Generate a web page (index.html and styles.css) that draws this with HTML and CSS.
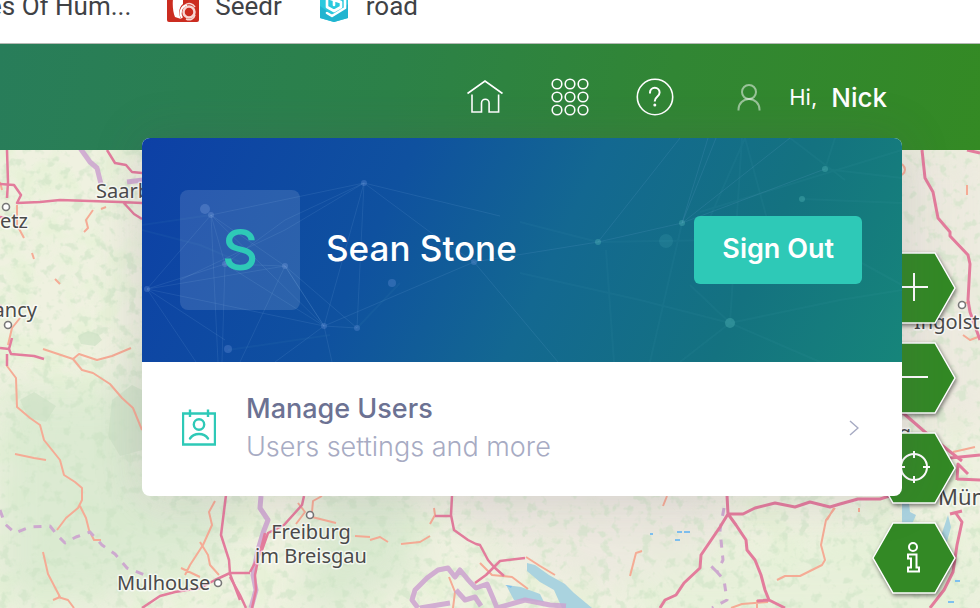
FILE: index.html
```html
<!DOCTYPE html>
<html lang="en">
<head>
<meta charset="utf-8">
<title>Map</title>
<link rel="stylesheet" href="styles.css">
</head>
<body>
<nav class="bookmarks" aria-label="Bookmarks">
  <a class="bookmark" href="#">es Of Hum...</a>
  <a class="bookmark" href="#">
    <svg class="bookmark-icon" viewBox="0 0 32 32" aria-hidden="true">
      <rect width="32" height="32" rx="2" fill="#cb2c20"/>
      <path d="M8 0C5 8 5 20 8 27l6 2c-3-6-2-12 2-15V6l-3-6z" fill="#fff"/>
      <path d="M15 28c-3-5-1-12 5-13" fill="none" stroke="#fff" stroke-width="2"/>
      <circle cx="22" cy="22" r="5.500" fill="none" stroke="#f7d6d2" stroke-width="2.500"/>
      <path d="M19 29c4 2 8 0 9-4M18 15c4-3 8-1 10 2" fill="none" stroke="#f7d6d2" stroke-width="1.500"/>
    </svg>
    Seedr
  </a>
  <a class="bookmark" href="#">
    <svg class="bookmark-icon" viewBox="0 0 32 32" aria-hidden="true">
      <path d="M2 4 16 -4 30 4V28L16 32 2 28z" fill="#2bc9de"/>
      <path d="M2 16 16 26 30 14V28L16 32 2 28z" fill="#21b4d0"/>
      <path d="M9 8v9l7 4 7-4v-5l-7-3v6M27 9v9l-13 8-5-3M13 9l9 3" fill="none" stroke="#fff" stroke-width="2.600" stroke-linecap="round" stroke-linejoin="round"/>
    </svg>
    road
  </a>
</nav>

<header class="topbar">
  <nav class="actions" aria-label="Main">
    <a class="action" href="#" aria-label="Home">
      <svg viewBox="0 0 38 38" aria-hidden="true"><path d="M1.500 15.500 19 3 36.500 15.500M6 16.500V34H15.500V25a3.800 3.800 0 0 1 7.600 0v9h9.500V16.500"/></svg>
    </a>
    <a class="action" href="#" aria-label="Apps">
      <svg viewBox="0 0 38 38" aria-hidden="true">
        <circle cx="6" cy="6" r="4.800"/><circle cx="19" cy="6" r="4.800"/><circle cx="32" cy="6" r="4.800"/>
        <circle cx="6" cy="19" r="4.800"/><circle cx="19" cy="19" r="4.800"/><circle cx="32" cy="19" r="4.800"/>
        <circle cx="6" cy="32" r="4.800"/><circle cx="19" cy="32" r="4.800"/><circle cx="32" cy="32" r="4.800"/>
      </svg>
    </a>
    <a class="action" href="#" aria-label="Help">
      <svg viewBox="0 0 38 38" aria-hidden="true"><circle cx="19" cy="19" r="17.700"/><path class="bold" d="M14 15.500v-1a4.800 4.800 0 0 1 9.600 0c0 4.500-4.800 4-4.800 8.500v.5"/><circle class="dot" cx="18.800" cy="27" r="1.500"/></svg>
    </a>
  </nav>
  <button class="user" type="button" aria-expanded="true">
    <svg class="user-icon" viewBox="0 0 24 28" aria-hidden="true"><circle cx="12" cy="9" r="7"/><path d="M1.500 27.500v-1a10.500 10.500 0 0 1 21 0v1"/></svg>
    <span class="hi">Hi,</span>
    <span class="nick">Nick</span>
  </button>

  <section class="panel" aria-label="Account">
    <div class="panel-head">
      <svg class="network" viewBox="142 138 760 224" preserveAspectRatio="xMinYMin slice" aria-hidden="true">
        <g class="links">
          <path d="M147 289 211 215 364 183 285 220 225 264 147 289 285 266 324 326 147 289 196 362M211 215 225 264 222 362M211 215 285 266 324 326 225 264 285 266 240 362M211 215 218 362M211 215 324 326 364 183 357 328 285 266M364 183 285 230 180 280M364 183 430 232 474 262 324 326 357 328M324 326 275 362M324 326 332 362M364 183 500 216M147 289 225 340M474 262 598 242 682 223 825 169M474 262 558 362M598 242 680 138M682 223 708 138M682 223 716 138M682 223 790 138"/>
          <path class="faint" d="M142 225 211 215M142 230 200 245 240 262M357 328 400 283M228 350 330 335M520 222 598 242 720 240M682 223 650 362M606 250 614 362M730 323 742 138M730 323 840 300 902 290M730 323 820 362M730 323 690 285M802 199 902 203M825 169 835 138M825 169 902 178M700 240 745 138M745 138 770 230M790 138 845 180M700 212 902 150M520 273 640 300 730 323M680 362 730 323M860 262 902 285"/>
        </g>
        <g class="nodes">
          <circle cx="364" cy="183" r="3"/><circle cx="211" cy="215" r="3"/><circle cx="205" cy="209" r="5"/>
          <circle cx="147" cy="289" r="3"/><circle cx="285" cy="266" r="3"/><circle cx="324" cy="326" r="3"/>
          <circle cx="357" cy="328" r="3"/><circle cx="228" cy="349" r="4"/><circle cx="225" cy="264" r="3"/>
          <circle cx="474" cy="262" r="3"/><circle cx="392" cy="283" r="4"/>
        </g>
        <g class="nodes teal">
          <circle cx="598" cy="242" r="3"/><circle cx="682" cy="223" r="3"/><circle cx="825" cy="169" r="3"/>
          <circle cx="802" cy="199" r="3"/><circle cx="730" cy="323" r="5"/><circle class="dim" cx="666" cy="241" r="7"/>
        </g>
      </svg>
      <div class="avatar">S</div>
      <h2 class="name">Sean Stone</h2>
      <button class="sign-out" type="button">Sign Out</button>
    </div>
    <a class="entry" href="#">
      <svg class="entry-icon" viewBox="0 0 34 38" aria-hidden="true"><path d="M1 4.500H33V35.500H1zM8 .5V8M26 .5V8"/><circle cx="17" cy="15.500" r="5.200"/><path d="M8 29.500c4-6 14-6 18 0" stroke-linecap="round"/></svg>
      <span class="entry-text">
        <span class="entry-title">Manage Users</span>
        <span class="entry-note">Users settings and more</span>
      </span>
      <svg class="chevron" viewBox="0 0 10 16" aria-hidden="true"><path d="M1 1 9 8 1 15"/></svg>
    </a>
  </section>
</header>

<main class="map">
  <svg class="tiles" viewBox="0 150 980 458" preserveAspectRatio="xMinYMin slice" role="img" aria-label="Map of the Upper Rhine region">
    <defs>
      <filter id="woods" x="0" y="0" width="100%" height="100%" color-interpolation-filters="sRGB">
        <feTurbulence type="fractalNoise" baseFrequency="0.095" numOctaves="3" seed="7"/>
        <feColorMatrix values="0 0 0 0 0.800  0 0 0 0 0.890  0 0 0 0 0.770  0 6 0 0 -3.200"/>
      </filter>
      <filter id="fields" x="0" y="0" width="100%" height="100%" color-interpolation-filters="sRGB">
        <feTurbulence type="fractalNoise" baseFrequency="0.030" numOctaves="4" seed="21"/>
        <feColorMatrix values="0 0 0 0 0.905  0 0 0 0 0.950  0 0 0 0 0.845  0 4 0 0 -1.700"/>
      </filter>
      <filter id="soft" x="-30%" y="-30%" width="160%" height="160%"><feGaussianBlur stdDeviation="18"/></filter>
    </defs>
    <rect y="150" width="980" height="458" fill="#eff1e0"/>
    <rect y="150" width="980" height="458" filter="url(#fields)" opacity=".8"/>
    <g filter="url(#soft)" opacity=".75">
      <path d="M0 390H110L150 350V500L240 490 220 560 100 600H0z" fill="#d6e8ce"/>
      <path d="M320 490 410 490 420 570 350 608H300z" fill="#d4e6cc"/>
      <path d="M430 480H720V570L600 590 480 540z" fill="#ebe6df"/>
      <path d="M890 140H990V430H890z" fill="#ece7df"/>
      <path d="M640 570 900 520 980 560V620H640z" fill="#e5f0d8"/>
    </g>
    <rect y="150" width="980" height="458" filter="url(#woods)" opacity=".5"/>
    <path d="M78 336l10-5 10 3 4 6-7 6-14-2zM112 400l20-15 10 5v60l-22 6-12-20zM20 400l14-8 22 14-10 16-18-4z" fill="#cde0c5" opacity=".65"/>

    <g class="water">
      <path d="M527 563l8 2 14 10 16 9 9 9 18 15H562l-8-18-14-8-13-11z"/>
      <path d="M506 585l15 2 19 7 4 8-30-2z"/>
      <path d="M902 502h7l1 10 6 3-4 9h-10zM948 515l3 12-6 22-8 6 3-16z"/>
      <path class="pond" d="M677 531h5v2h-5zM684 531h6v2h-6zM675 539h5v2h-5zM650 533h3v2h-3zM955 580h5v2h-5zM948 601h6v2h-6zM505 585l7 1-1 2z"/>
    </g>

    <g class="minor">
      <path d="M0 182 2 190M17 205V225L24 238M32 253 34 259M55 279 60 284M93 210 86 220 88 228 84 232M101 209 106 207M20 318 12 328 8 345M7 358 7 366 16 378 17 407 30 418 40 425 44 440 60 460 64 475 75 482 82 488V500L78 508 66 518 57 530M80 506 86 518 89 530 94 540H101M43 349 73 359 79 354 97 360 112 356 131 348M73 359 82 370 93 373 110 384 122 398 133 408 142 430M15 454 34 458 46 460M43 552 48 574 60 597 53 600M58 597 68 600 74 608M215 501 209 512 212 525 203 545 190 565 185 575M200 542 208 555 210 565 219 575M181 568 200 577"/>
      <path d="M298 503 305 512 296 524M322 496 313 501 312 512M312 517 336 523M370 537 355 536M370 540 380 537 388 542M401 544 420 542 430 536M449 577 455 592 453 608M526 557 540 566 555 575M480 563 492 575 512 577 528 589M434 508 435 515 430 524M667 496 663 506M642 551 636 553 630 576M835 508 826 520 821 545 825 560 822 565 800 576 785 576 777 580M731 608 742 604 768 602M757 600V608M859 508V512M967 185V195M963 335 970 340 978 337M953 452 962 450 975 447M834 508 827 520"/>
      <path d="M902 164q6 6 0 11M965 303 970 302"/>
    </g>
    <g class="border">
      <path d="M80 148 90 162 97 168 101 184M127 182 143 180M261 496 260 508 268 520 263 533 258 550 253 575 256 590 251 608"/>
      <path d="M418 608 412 600 415 590 427 578 438 570 448 568 455 577 460 570 470 582 476 588 487 584 493 598 497 608M456 590 465 600 475 597 481 606M420 608 450 603"/>
      <path d="M497 608 525 600 550 605 566 606"/>
    </g>
    <path class="frontier" d="M0 510 5 524 15 533 30 527 50 526 58 536 65 543 76 537 90 532 102 545 115 554 127 568 145 575M724 508 720 530 723 560 717 572 724 580 727 600 712 608M717 572 710 565"/>
    <g class="major">
      <path d="M7 150 8 182 7 198M0 184 14 185 21 195 17 203 40 202 60 200 120 202 142 203M123 202 134 214 142 219M107 150 115 163 126 165 132 172 142 173M0 217 6 218M0 348 9 349 11 354 34 356 44 359M9 349 12 338M7 354V366M0 305 3 312M226 495 221 535 229 560 230 574 240 600M142 608 160 596 175 592 200 588 215 580 230 573 250 573"/>
      <path d="M304 496 302 505 284 525 268 533 262 550 250 572M230 577 240 595 246 608M452 496 451 515 454 530 468 540 476 544 480 545 488 560 494 567 486 575 475 583M435 516 451 516M494 567 500 561 525 558M494 567 504 576M265 533 258 560 255 575 256 590 252 608"/>
      <path class="wide" d="M727 495 728 514 720 527 701 555 700 568 684 583 676 595 665 600 660 608M728 514 743 514 755 508 775 503 795 507 810 502 830 507 840 504 858 499 880 499 902 492M728 514 736 525 746 540 747 550 755 560 761 575 765 590 769 600 779 605 785 608M757 601 769 600"/>
      <path class="wide" d="M922 150 925 178 933 192 938 218 950 232V236L968 255 970 264 968 300 970 312 980 340M902 412 925 432 948 450 962 461M950 458 980 455M957 479 980 480M968 474 958 464 957 480M955 512 962 522 957 545 953 572 944 590 930 608M950 514 962 511M967 150 980 153"/>
    </g>
    <g class="towns">
      <circle cx="6" cy="207" r="3.500"/><circle cx="8" cy="325" r="3.500"/><circle cx="218" cy="583" r="3.500"/>
      <circle cx="310" cy="515" r="3.500"/><circle cx="962" cy="305" r="3.500"/>
    </g>
    <g class="labels">
      <text x="96" y="198">Saarbrücken</text>
      <text x="28" y="228" text-anchor="end">Metz</text>
      <text x="37" y="317" text-anchor="end">Nancy</text>
      <text x="117" y="590">Mulhouse</text>
      <text x="311" y="539" text-anchor="middle">Freiburg</text>
      <text x="311" y="563" text-anchor="middle">im Breisgau</text>
      <text x="914" y="329">Ingolstadt</text>
      <text x="911" y="440" text-anchor="end">Augsburg</text>
      <text class="city" x="938" y="505">München</text>
    </g>
  </svg>

  <div class="tools">
    <button class="tool" type="button" aria-label="Zoom in">
      <svg viewBox="0 0 84 72" aria-hidden="true"><path class="hex" d="M1 36 21 1H63L83 36 63 71H21z"/><path d="M42 21V49M28 35H56"/></svg>
    </button>
    <button class="tool" type="button" aria-label="Zoom out">
      <svg viewBox="0 0 84 72" aria-hidden="true"><path class="hex" d="M1 36 21 1H63L83 36 63 71H21z"/><path d="M28 35H56"/></svg>
    </button>
    <button class="tool" type="button" aria-label="My location">
      <svg viewBox="0 0 84 72" aria-hidden="true"><path class="hex" d="M1 36 21 1H63L83 36 63 71H21z"/><circle cx="42" cy="35" r="13"/><path d="M42 19V26M42 44V51M26 35H33M51 35H58"/></svg>
    </button>
    <button class="tool" type="button" aria-label="Information">
      <svg viewBox="0 0 84 72" aria-hidden="true"><path class="hex" d="M1 36 21 1H63L83 36 63 71H21z"/><circle cx="41" cy="25" r="4"/><path d="M36 32.500H44.500V45.500H47V49.500H36V45.500H39V36.500H36z"/></svg>
    </button>
  </div>
</main>
</body>
</html>
```

FILE: styles.css
```css
* {
  box-sizing: border-box;
}

body {
  margin: 0;
  min-height: 100vh;
  display: flex;
  flex-direction: column;
  overflow: hidden;
  font-family: Inter, "Open Sans", sans-serif;
}

a {
  color: inherit;
  text-decoration: none;
}

button {
  border: 0;
  padding: 0;
  background: none;
  color: inherit;
  font: inherit;
  cursor: pointer;
}

svg {
  display: block;
}

.bookmarks {
  display: flex;
  align-items: flex-end;
  gap: 36px;
  height: 44px;
  margin-left: -12px;
  padding-bottom: 21px;
  border-bottom: 1px solid #b4b9b4;
  background: #fff;
  overflow: hidden;
}

.bookmark {
  display: flex;
  flex: none;
  align-items: center;
  gap: 16px;
  color: #3f4246;
  font: 26px/32px Roboto, sans-serif;
}

.bookmark-icon {
  width: 32px;
  height: 32px;
}

.topbar {
  position: relative;
  z-index: 2;
  display: flex;
  align-items: center;
  justify-content: flex-end;
  gap: 63px;
  height: 106px;
  padding-right: 93px;
  background: linear-gradient(100deg, #287d5a 0%, #2c8148 40%, #318634 68%, #348a24 100%);
  color: #fff;
}

.actions {
  display: flex;
  gap: 47px;
}

.action svg {
  width: 38px;
  height: 38px;
  fill: none;
  stroke: #fff;
  stroke-width: 1.6;
}

.action .bold {
  stroke-width: 2;
}

.action .dot {
  fill: #fff;
  stroke: none;
}

.user {
  display: flex;
  align-items: center;
  gap: 14px;
}

.user-icon {
  width: 24px;
  height: 28px;
  margin-right: 14px;
  fill: none;
  stroke: rgba(255, 255, 255, .5);
  stroke-width: 2;
}

.hi {
  font-size: 22px;
}

.nick {
  font-size: 26px;
  font-weight: 500;
}

.panel {
  position: absolute;
  top: 94px;
  right: 78px;
  width: 760px;
  max-width: calc(100vw - 98px);
  border-radius: 8px;
  overflow: hidden;
  background: #fff;
  box-shadow: 0 0 50px rgba(82, 63, 105, .18);
}

.panel-head {
  position: relative;
  display: flex;
  align-items: center;
  padding: 52px 40px 52px 38px;
  background: linear-gradient(115deg, #0d40a6 0%, #0f519f 32%, #136891 54%, #147280 78%, #16857a 100%);
}

.network {
  position: absolute;
  inset: 0;
  width: 100%;
  height: 100%;
}

.links {
  fill: none;
  stroke: rgba(130, 180, 230, .14);
  stroke-width: 1;
}

.links .faint {
  stroke: rgba(110, 190, 200, .06);
  stroke-width: 2;
}

.nodes {
  fill: rgba(110, 150, 220, .32);
}

.nodes.teal {
  fill: rgba(90, 190, 190, .35);
}

.nodes .dim {
  fill: rgba(90, 190, 200, .14);
}

.avatar,
.name,
.sign-out {
  position: relative;
}

.avatar {
  display: flex;
  align-items: center;
  justify-content: center;
  width: 120px;
  height: 120px;
  border-radius: 8px;
  background: rgba(255, 255, 255, .12);
  color: #2ec9b7;
  font-size: 56px;
  font-weight: 500;
}

.name {
  flex: 1;
  margin: 0 0 0 26px;
  font-size: 35px;
  font-weight: 500;
}

.sign-out {
  height: 68px;
  padding: 0 28px;
  border-radius: 6px;
  background: #2ec9b7;
  font-size: 27px;
  font-weight: 600;
}

.name,
.sign-out {
  padding-bottom: 4px;
}

.entry {
  display: flex;
  align-items: center;
  padding: 28px 43px 30px 40px;
}

.entry-icon {
  width: 34px;
  height: 38px;
  fill: none;
  stroke: #2ec9b7;
  stroke-width: 2.4;
}

.entry-text {
  display: flex;
  flex: 1;
  flex-direction: column;
  margin-left: 30px;
  font-size: 27px;
  line-height: 38px;
}

.entry-title {
  color: #6c7293;
  font-weight: 500;
}

.entry-note {
  color: #a7abc3;
  font-weight: 300;
}

.chevron {
  width: 10px;
  height: 16px;
  fill: none;
  stroke: #a7abc3;
  stroke-width: 1.5;
}

.map {
  position: relative;
  flex: 1;
  min-height: 458px;
  background: #eef0df;
}

.tiles {
  position: absolute;
  inset: 0;
  width: 100%;
  height: 100%;
}

.water {
  fill: #aad3df;
}

.pond {
  fill: #7fc0ee;
}

.minor,
.major,
.border,
.frontier {
  fill: none;
  stroke-linejoin: round;
}

.minor {
  stroke: #f5ab95;
  stroke-width: 2;
}

.major {
  stroke: #e37c9c;
  stroke-width: 2.5;
}

.major .wide {
  stroke-width: 3;
}

.border {
  stroke: #cda3d0;
  stroke-width: 5;
  opacity: .85;
}

.frontier {
  stroke: #cda9cf;
  stroke-width: 3;
  stroke-dasharray: 8 8;
}

.towns {
  fill: #fff;
  stroke: #777;
  stroke-width: 1.6;
}

.labels {
  fill: #4a4a4a;
  stroke: rgba(255, 255, 255, .7);
  stroke-width: 3;
  stroke-linejoin: round;
  paint-order: stroke;
  font: 20px "Noto Sans", sans-serif;
}

.labels .city {
  font-size: 22px;
}

.tools {
  position: absolute;
  top: 102px;
  right: 24px;
  display: flex;
  flex-direction: column;
  gap: 18px;
}

.tool svg {
  width: 84px;
  height: 72px;
  fill: none;
  stroke: #fff;
  stroke-width: 2;
  filter: drop-shadow(1px 2px 2px rgba(0, 0, 0, .5));
}

.tool .hex {
  fill: #338925;
  stroke-width: 1.5;
}
```
